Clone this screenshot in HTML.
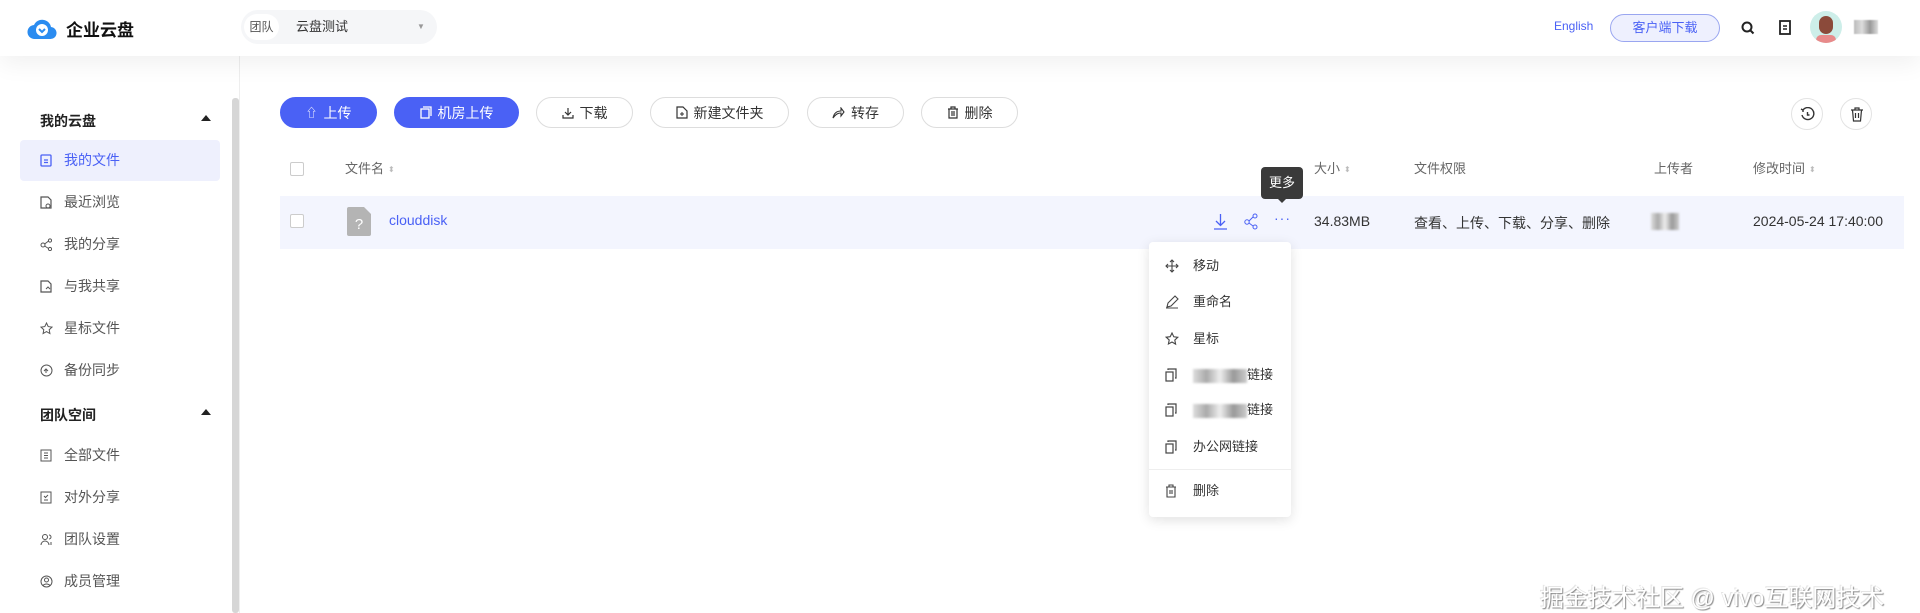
<!DOCTYPE html>
<html><head><meta charset="utf-8"><style>
*{margin:0;padding:0;box-sizing:border-box}
body{width:1920px;height:613px;overflow:hidden;background:#fff;font-family:"Liberation Sans","Noto Sans CJK SC",sans-serif;font-size:14px;color:#333;position:relative}
.a{position:absolute}
.hdr{left:0;top:0;width:1920px;height:56px;background:#fff;box-shadow:0 8px 24px rgba(0,0,0,0.06);z-index:2}
.side{left:0;top:56px;width:240px;height:557px;border-right:1px solid #eee}
.sb{left:232px;top:98px;width:7px;height:515px;background:#d6d6d6;border-radius:3px}
.grp{font-weight:bold;color:#222;font-size:14px;left:40px}
.it{left:20px;width:200px;height:41px;line-height:41px;padding-left:44px;color:#555;font-size:14px;border-radius:4px}
.it svg{position:absolute;left:20px;top:14px}
.btn{top:97px;height:31px;border-radius:16px;border:1px solid #ddd;background:#fff;color:#333;font-size:14px;display:flex;align-items:center;justify-content:center;gap:6px}
.btn.p{background:#4a61f5;border-color:#4a61f5;color:#fff}
.th{top:160px;font-size:13px;color:#666;line-height:18px}
.sort{display:inline-block;width:6px;margin-left:4px;vertical-align:middle}
.cb{width:14px;height:14px;border:1px solid #ccc;border-radius:2px;background:#fff}
.mi{left:1149px;width:142px;height:36px;line-height:36px;padding-left:44px;font-size:13px;color:#333}
.mi svg{position:absolute;left:16px;top:11px}
.blur{display:inline-block;background:linear-gradient(90deg,#ddd,#aaa,#eee,#999,#ccc);height:14px;vertical-align:middle;filter:blur(1px)}
.tri{width:0;height:0;border-left:5px solid transparent;border-right:5px solid transparent;border-bottom:6px solid #222}
</style></head><body>
<div class="a hdr">
  <svg class="a" style="left:27px;top:15px" width="30" height="26" viewBox="0 0 30 26"><path d="M8 24a7 7 0 0 1-1-14 9 9 0 0 1 17 2 6 6 0 0 1-1 12z" fill="#2b8cf0"/><circle cx="15" cy="15" r="6" fill="#fff"/><path d="M12 14l3 3 3-3" stroke="#2b8cf0" stroke-width="2" fill="none"/></svg>
  <div class="a" style="left:66px;top:16px;font-size:17px;font-weight:bold;color:#111">企业云盘</div>
  <div class="a" style="left:241px;top:10px;width:196px;height:34px;border-radius:17px;background:#f5f6f8"></div>
  <div class="a" style="left:244px;top:14px;width:35px;height:26px;border-radius:13px;background:#fff;font-size:12px;color:#555;line-height:26px;text-align:center">团队</div>
  <div class="a" style="left:296px;top:18px;font-size:13px;color:#333;line-height:18px">云盘测试</div>
  <div class="a" style="left:417px;top:22px;font-size:8px;color:#999">▼</div>
  <div class="a" style="left:1554px;top:19px;font-size:12px;color:#4a61f5">English</div>
  <div class="a" style="left:1610px;top:14px;width:110px;height:28px;border-radius:14px;border:1px solid #9aa6f0;background:#eef0fe;color:#4a61f5;font-size:13px;text-align:center;line-height:26px">客户端下载</div>
  <svg class="a" style="left:1741px;top:21px" width="14" height="14" viewBox="0 0 14 14"><circle cx="6" cy="6" r="4.5" stroke="#222" stroke-width="2" fill="none"/><path d="M9.5 9.5l3 3" stroke="#222" stroke-width="2"/></svg>
  <svg class="a" style="left:1779px;top:20px" width="12" height="15" viewBox="0 0 12 15"><rect x="1" y="1" width="10" height="13" stroke="#222" stroke-width="1.8" fill="none"/><path d="M4 6h4M4 9h4" stroke="#222" stroke-width="1.5"/></svg>
  <div class="a" style="left:1810px;top:11px;width:32px;height:32px;border-radius:50%;background:#cdeee9;overflow:hidden"><div class="a" style="left:9px;top:5px;width:14px;height:18px;border-radius:7px;background:#8b4a3a"></div><div class="a" style="left:6px;top:24px;width:20px;height:10px;border-radius:6px;background:#e88a8a"></div></div>
  <div class="a" style="left:1854px;top:20px;width:24px;height:14px;background:linear-gradient(90deg,#bbb,#ddd,#999,#ddd);filter:blur(0.6px)"></div>
</div>
<div class="a side"></div>
<div class="a sb"></div>
<div class="a grp" style="top:111px">我的云盘</div><div class="a tri" style="left:201px;top:115px"></div>
<div class="a it" style="top:140px;background:#eef0fd;color:#4a61f5"><svg width="12" height="13" viewBox="0 0 12 13"><rect x="1" y="1" width="10" height="11" rx="1" stroke="#4a61f5" stroke-width="1.3" fill="none"/><path d="M4 6h4M4 8.5h4" stroke="#4a61f5" stroke-width="1.2"/></svg>我的文件</div>
<div class="a it" style="top:182px"><svg width="12" height="13" viewBox="0 0 12 13"><path d="M1 1h7l3 3v8H1z" stroke="#555" stroke-width="1.2" fill="none"/><circle cx="8" cy="10" r="2" stroke="#555" fill="none"/></svg>最近浏览</div>
<div class="a it" style="top:224px"><svg width="12" height="13" viewBox="0 0 12 13"><circle cx="3" cy="7" r="2" stroke="#555" fill="none"/><circle cx="10" cy="2.5" r="1.6" stroke="#555" fill="none"/><circle cx="10" cy="11" r="1.6" stroke="#555" fill="none"/><path d="M4.6 6l4-3M4.6 8l4 2.5" stroke="#555"/></svg>我的分享</div>
<div class="a it" style="top:266px"><svg width="12" height="13" viewBox="0 0 12 13"><path d="M1 1h7l3 3v8H1z" stroke="#555" stroke-width="1.2" fill="none"/><path d="M6 9l2-2 2 2" stroke="#555" fill="none"/></svg>与我共享</div>
<div class="a it" style="top:308px"><svg width="13" height="13" viewBox="0 0 13 13"><path d="M6.5 1l1.7 3.6 3.8.5-2.8 2.6.7 3.8-3.4-1.9-3.4 1.9.7-3.8L1 5.1l3.8-.5z" stroke="#555" fill="none"/></svg>星标文件</div>
<div class="a it" style="top:350px"><svg width="13" height="13" viewBox="0 0 13 13"><circle cx="6.5" cy="6.5" r="5.5" stroke="#555" fill="none"/><path d="M4 7l2-2 2 2M6 5v4" stroke="#555" fill="none"/></svg>备份同步</div>
<div class="a grp" style="top:405px">团队空间</div><div class="a tri" style="left:201px;top:409px"></div>
<div class="a it" style="top:435px"><svg width="12" height="13" viewBox="0 0 12 13"><rect x="1" y="1" width="10" height="11" stroke="#555" fill="none"/><path d="M4 4h4M4 6.5h4M4 9h4" stroke="#555"/></svg>全部文件</div>
<div class="a it" style="top:477px"><svg width="12" height="13" viewBox="0 0 12 13"><rect x="1" y="1" width="10" height="11" stroke="#555" fill="none"/><path d="M4 5l1.5 1.5L8 4M4 9h4" stroke="#555" fill="none"/></svg>对外分享</div>
<div class="a it" style="top:519px"><svg width="13" height="13" viewBox="0 0 13 13"><circle cx="5" cy="4" r="2.5" stroke="#555" fill="none"/><path d="M1 12a4 4 0 0 1 8 0M9 2a2 2 0 0 1 0 4M11 9v3" stroke="#555" fill="none"/></svg>团队设置</div>
<div class="a it" style="top:561px"><svg width="13" height="13" viewBox="0 0 13 13"><circle cx="6.5" cy="6.5" r="5.5" stroke="#555" fill="none"/><circle cx="6.5" cy="5" r="2" stroke="#555" fill="none"/><path d="M3 10.5a4 3 0 0 1 7 0" stroke="#555" fill="none"/></svg>成员管理</div>

<div class="a btn p" style="left:280px;width:97px"><span style="font-size:12px">⇧</span>上传</div>
<div class="a btn p" style="left:394px;width:125px"><svg width="12" height="13" viewBox="0 0 12 13"><rect x="1" y="3" width="8" height="9" stroke="#fff" stroke-width="1.3" fill="none"/><path d="M3 1h8v9" stroke="#fff" stroke-width="1.3" fill="none"/></svg>机房上传</div>
<div class="a btn" style="left:536px;width:97px"><svg width="12" height="12" viewBox="0 0 12 12"><path d="M6 1v7M3 5l3 3 3-3M1 8v3h10V8" stroke="#333" stroke-width="1.2" fill="none"/></svg>下载</div>
<div class="a btn" style="left:650px;width:139px"><svg width="12" height="13" viewBox="0 0 12 13"><path d="M1 1h6l4 4v7H1z" stroke="#333" stroke-width="1.2" fill="none"/><path d="M6 6v4M4 8h4" stroke="#333"/></svg>新建文件夹</div>
<div class="a btn" style="left:807px;width:97px"><svg width="13" height="12" viewBox="0 0 13 12"><path d="M1 11c1-5 4-7 8-7V1l3 4-3 4V6c-3 0-5 1-8 5z" stroke="#333" stroke-width="1.1" fill="none"/></svg>转存</div>
<div class="a btn" style="left:921px;width:97px"><svg width="12" height="13" viewBox="0 0 12 13"><path d="M1 3h10M4 3V1h4v2M2 3v9h8V3M5 5v5M7 5v5" stroke="#333" stroke-width="1.2" fill="none"/></svg>删除</div>
<div class="a" style="left:1791px;top:98px;width:32px;height:32px;border-radius:50%;border:1px solid #e3e3e3"><svg class="a" style="left:8px;top:8px" width="15" height="15" viewBox="0 0 15 15"><path d="M3 3a6 6 0 1 1-1 5" stroke="#333" stroke-width="1.4" fill="none"/><path d="M1 2l2 1 0 2" stroke="#333" stroke-width="1.4" fill="none"/><path d="M7.5 5v3h2" stroke="#333" stroke-width="1.4" fill="none"/></svg></div>
<div class="a" style="left:1840px;top:98px;width:32px;height:32px;border-radius:50%;border:1px solid #e3e3e3"><svg class="a" style="left:9px;top:8px" width="14" height="15" viewBox="0 0 14 15"><path d="M1 3h12M5 3V1h4v2M2.5 3l1 11h7l1-11M5.5 6v5M8.5 6v5" stroke="#333" stroke-width="1.2" fill="none"/></svg></div>

<div class="a cb" style="left:290px;top:162px"></div>
<div class="a th" style="left:345px">文件名<span class="sort" style="color:#bbb;font-size:8px">⬍</span></div>
<div class="a th" style="left:1314px">大小<span class="sort" style="color:#bbb;font-size:8px">⬍</span></div>
<div class="a th" style="left:1414px">文件权限</div>
<div class="a th" style="left:1654px">上传者</div>
<div class="a th" style="left:1753px">修改时间<span class="sort" style="color:#bbb;font-size:8px">⬍</span></div>

<div class="a" style="left:280px;top:196px;width:1624px;height:53px;background:#f3f5fe"></div>
<div class="a cb" style="left:290px;top:214px"></div>
<svg class="a" style="left:347px;top:207px" width="24" height="29" viewBox="0 0 24 29"><path d="M0 2a2 2 0 0 1 2-2h15l7 7v20a2 2 0 0 1-2 2H2a2 2 0 0 1-2-2z" fill="#b4b4b4"/><text x="12" y="22" font-size="15" fill="#fff" text-anchor="middle" font-family="Liberation Sans">?</text></svg>
<div class="a" style="left:389px;top:212px;font-size:14px;color:#4a61f5">clouddisk</div>
<svg class="a" style="left:1213px;top:213px" width="15" height="17" viewBox="0 0 15 17"><path d="M7.5 1v11M3 8l4.5 4.5L12 8M1 16h13" stroke="#4a61f5" stroke-width="1.3" fill="none"/></svg>
<svg class="a" style="left:1244px;top:213px" width="14" height="17" viewBox="0 0 14 17"><circle cx="3" cy="9" r="2.2" stroke="#4a61f5" fill="none"/><circle cx="11" cy="3" r="2" stroke="#4a61f5" fill="none"/><circle cx="11" cy="14" r="2" stroke="#4a61f5" fill="none"/><path d="M5 8l4-4M5 10l4 3" stroke="#4a61f5"/></svg>
<div class="a" style="left:1274px;top:210px;font-size:14px;color:#4a61f5;letter-spacing:1px">···</div>
<div class="a" style="left:1314px;top:213px;font-size:14px;color:#333">34.83MB</div>
<div class="a" style="left:1414px;top:213px;font-size:14px;color:#333">查看、上传、下载、分享、删除</div>
<div class="a blur" style="left:1651px;top:213px;width:28px;height:17px"></div>
<div class="a" style="left:1753px;top:213px;font-size:14px;color:#333">2024-05-24 17:40:00</div>

<div class="a" style="left:1261px;top:167px;width:42px;height:32px;background:#3a3a3a;border-radius:4px;color:#fff;font-size:13px;line-height:32px;text-align:center">更多</div>
<div class="a" style="left:1277px;top:198px;width:0;height:0;border-left:5px solid transparent;border-right:5px solid transparent;border-top:5px solid #3a3a3a"></div>

<div class="a" style="left:1149px;top:242px;width:142px;height:275px;background:#fff;border-radius:4px;box-shadow:0 3px 12px rgba(0,0,0,0.12)"></div>
<div class="a mi" style="top:248px"><svg width="14" height="14" viewBox="0 0 14 14"><path d="M7 1v12M1 7h12M5 3l2-2 2 2M5 11l2 2 2-2M3 5L1 7l2 2M11 5l2 2-2 2" stroke="#444" stroke-width="1.1" fill="none"/></svg>移动</div>
<div class="a mi" style="top:284px"><svg width="14" height="14" viewBox="0 0 14 14"><path d="M2 12l1-4 7-7 3 3-7 7zM1 13h12" stroke="#444" stroke-width="1.1" fill="none"/></svg>重命名</div>
<div class="a mi" style="top:321px"><svg width="14" height="14" viewBox="0 0 14 14"><path d="M7 1l1.8 3.8 4 .5-3 2.8.8 4L7 10 3.4 12l.8-4-3-2.8 4-.5z" stroke="#444" stroke-width="1.1" fill="none"/></svg>星标</div>
<div class="a mi" style="top:357px"><svg width="12" height="14" viewBox="0 0 12 14"><rect x="1" y="4" width="7" height="9" stroke="#444" stroke-width="1.2" fill="none"/><path d="M3 2V1h8v9h-1" stroke="#444" stroke-width="1.2" fill="none"/></svg><span class="blur" style="width:54px"></span>链接</div>
<div class="a mi" style="top:392px"><svg width="12" height="14" viewBox="0 0 12 14"><rect x="1" y="4" width="7" height="9" stroke="#444" stroke-width="1.2" fill="none"/><path d="M3 2V1h8v9h-1" stroke="#444" stroke-width="1.2" fill="none"/></svg><span class="blur" style="width:54px"></span>链接</div>
<div class="a mi" style="top:429px"><svg width="12" height="14" viewBox="0 0 12 14"><rect x="1" y="4" width="7" height="9" stroke="#444" stroke-width="1.2" fill="none"/><path d="M3 2V1h8v9h-1" stroke="#444" stroke-width="1.2" fill="none"/></svg>办公网链接</div>
<div class="a" style="left:1149px;top:469px;width:142px;height:1px;background:#eee"></div>
<div class="a mi" style="top:473px"><svg width="12" height="14" viewBox="0 0 12 14"><path d="M1 3h10M4 3V1h4v2M2 3v10h8V3M5 6v4M7 6v4" stroke="#444" stroke-width="1.1" fill="none"/></svg>删除</div>

<div class="a" style="left:1540px;top:578px;font-size:24px;color:#fff;text-shadow:1px 1px 1px #888,-1px -1px 0 #e5e5e5;white-space:nowrap">掘金技术社区 @ vivo互联网技术</div>
</body></html>
